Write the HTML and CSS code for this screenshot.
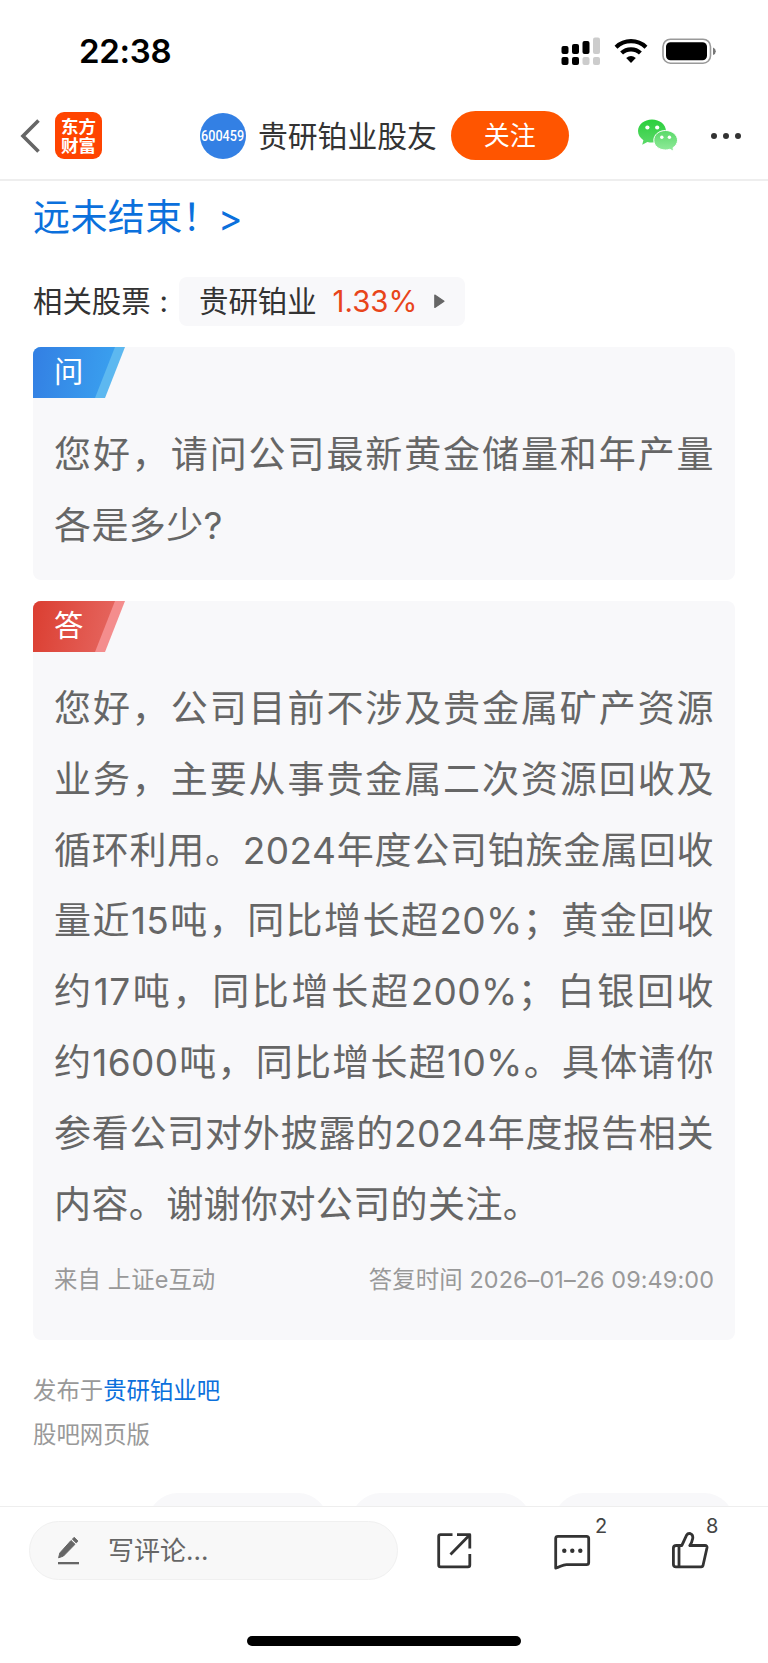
FILE: index.html
```html
<!DOCTYPE html>
<html lang="zh-CN">
<head>
  <meta charset="UTF-8" />
  <meta name="viewport" content="width=device-width, initial-scale=1.0"/>
  <title>贵研铂业股友</title>
  <link rel="stylesheet" href="styles.css">
</head>
<body>
  <div class="status-bar">
    <span class="time">22:38</span>
    <svg class="status-icons" width="156" height="30" viewBox="0 0 156 30">
      <g fill="#000">
        <rect x="0.5" y="10" width="7" height="8" rx="2"/>
        <rect x="11" y="8" width="7" height="10" rx="2"/>
        <rect x="21.5" y="5" width="7" height="13" rx="2"/>
        <rect x="0.5" y="21" width="7" height="8" rx="2"/>
        <rect x="11" y="21" width="7" height="8" rx="2"/>
      </g>
      <g fill="#ccc">
        <rect x="32" y="1.5" width="7" height="16.5" rx="2"/>
        <rect x="21.5" y="21" width="7" height="8" rx="2"/>
        <rect x="32" y="21" width="7" height="8" rx="2"/>
      </g>
      <g fill="none" stroke="#000" stroke-width="4.2">
        <path d="M55 11.2 C63.500 3.200 76.500 3.200 85 11.200"/>
        <path d="M60.600 17 C65.800 12.100 74.200 12.100 79.400 17"/>
      </g>
      <path d="M65.200 22 Q70 18 74.800 22 L70 27 Z" fill="#000"/>
      <rect x="102" y="3.200" width="47.500" height="24" rx="7.500" fill="none" stroke="#999" stroke-width="1.600"/>
      <rect x="105" y="6.200" width="41" height="18" rx="4.500" fill="#000"/>
      <path d="M152 11.500 Q154.800 12.500 154.800 15.200 Q154.800 18 152 19 Z" fill="#777"/>
    </svg>
  </div>

  <header class="nav">
    <svg class="back" width="22" height="36" viewBox="0 0 22 36">
      <path d="M18.500 2.500 L3 18 L18.500 33.500" fill="none" stroke="#666" stroke-width="3.600"/>
    </svg>
    <div class="logo"><span>东方</span><span>财富</span></div>
    <div class="avatar"><span>600459</span></div>
    <h1 class="nav-title">贵研铂业股友</h1>
    <button class="follow">关注</button>
    <svg class="wechat" width="40" height="33" viewBox="0 0 40 33">
      <defs>
        <linearGradient id="green" x1="0" y1="0" x2="0" y2="1">
          <stop offset="0" stop-color="#2bcf3c"/>
          <stop offset="1" stop-color="#5bd969"/>
        </linearGradient>
        <linearGradient id="lightgreen" x1="0" y1="0" x2="0" y2="1">
          <stop offset="0" stop-color="#59d968"/>
          <stop offset="1" stop-color="#93eb9d"/>
        </linearGradient>
      </defs>
      <path d="M14 0.500 C6.300 0.500 0 5.500 0 12 C0 15.800 2.200 19 5.400 21.200 L4.200 25.800 L9.400 23 C11 23.500 12.500 23.600 14 23.600 C21.700 23.600 28 18.500 28 12 C28 5.500 21.700 0.500 14 0.500 Z" fill="url(#green)"/>
      <circle cx="9.400" cy="8.500" r="2.100" fill="#fff"/>
      <circle cx="19.200" cy="8.500" r="2.100" fill="#fff"/>
      <path d="M27.500 11.500 C20.900 11.500 15.800 15.800 15.800 21.200 C15.800 26.700 20.900 31 27.500 31 C29 31 30.500 30.800 31.800 30.300 L35.600 32.300 L35 28.700 C37.800 26.900 39.500 24.200 39.500 21.200 C39.500 15.800 34.100 11.500 27.500 11.500 Z" fill="url(#lightgreen)" stroke="#fff" stroke-width="1"/>
      <circle cx="23.800" cy="18.200" r="1.700" fill="#fff"/>
      <circle cx="31.400" cy="18.200" r="1.700" fill="#fff"/>
    </svg>
    <svg class="more" width="32" height="8" viewBox="0 0 32 8">
      <circle cx="4" cy="4" r="3" fill="#333"/>
      <circle cx="16" cy="4" r="3" fill="#333"/>
      <circle cx="28" cy="4" r="3" fill="#333"/>
    </svg>
  </header>

  <main class="content">
    <a class="topic">远未结束！<span>&gt;</span></a>

    <div class="related">
      <span class="related-label">相关股票<i>:</i></span>
      <div class="stock">
        <span class="stock-name">贵研铂业</span>
        <span class="rise">1.33%</span>
        <svg width="11" height="15" viewBox="0 0 11 15">
          <path d="M0.800 1 L10 7.200 L0.800 13.400 Z" fill="#666" stroke="#666" stroke-width="1.200" stroke-linejoin="round"/>
        </svg>
      </div>
    </div>

    <section class="card question">
      <div class="tag"><span>问</span></div>
      <div class="text">
        <p>您好，请问公司最新黄金储量和年产量</p>
        <p class="last">各是多少?</p>
      </div>
    </section>

    <section class="card answer">
      <div class="tag"><span>答</span></div>
      <div class="text">
        <p>您好，公司目前不涉及贵金属矿产资源</p>
        <p>业务，主要从事贵金属二次资源回收及</p>
        <p>循环利用。2024年度公司铂族金属回收</p>
        <p>量近15吨，同比增长超20%；黄金回收</p>
        <p>约17吨，同比增长超200%；白银回收</p>
        <p>约1600吨，同比增长超10%。具体请你</p>
        <p>参看公司对外披露的2024年度报告相关</p>
        <p class="last">内容。谢谢你对公司的关注。</p>
      </div>
      <div class="source">
        <span>来自 上证e互动</span>
        <span>答复时间 2026–01–26 09:49:00</span>
      </div>
    </section>

    <div class="publish">
      <div>发布于<a>贵研铂业吧</a></div>
      <div>股吧网页版</div>
    </div>

    <div class="chips">
      <span></span><span></span><span></span>
    </div>
  </main>

  <footer class="toolbar">
    <div class="comment-box">
      <svg width="22" height="29" viewBox="0 0 22 29">
        <path d="M0.600 21.800 L1.800 17 L13 4.500 L17 8.300 L5.500 20 Z" fill="#666" stroke="#666" stroke-width="1" stroke-linejoin="round"/>
        <path d="M14.300 3.200 L16.200 1.200 L20 5 L18.200 7 Z" fill="#666" stroke="#666" stroke-width="0.800" stroke-linejoin="round"/>
        <rect x="0" y="26" width="21" height="2.300" fill="#666"/>
      </svg>
      <span>写评论...</span>
    </div>
    <div class="actions">
      <div class="action">
        <svg width="38" height="38" viewBox="0 0 38 38">
          <g fill="none" stroke="#333" stroke-width="2.800" stroke-linejoin="round">
            <path d="M17.500 2.700 H5.500 Q3.700 2.700 3.700 4.500 V33 Q3.700 34.800 5.500 34.800 H33 Q34.800 34.800 34.800 33 V22"/>
            <path d="M22 2.700 H34.800 V16.500 M34.800 2.700 L15.500 22.500"/>
          </g>
        </svg>
      </div>
      <div class="action">
        <svg width="38" height="38" viewBox="0 0 38 38">
          <path d="M2.700 35.300 V6.500 Q2.700 4.300 4.900 4.300 H33.500 Q35.700 4.300 35.700 6.500 V30.500 Q35.700 32.700 33.500 32.700 H13.500 C9 32.700 7 35.300 2.700 36 Z" fill="none" stroke="#333" stroke-width="2.800" stroke-linejoin="round"/>
          <circle cx="11.300" cy="18.700" r="2.200" fill="#333"/>
          <circle cx="19.300" cy="18.700" r="2.200" fill="#333"/>
          <circle cx="27.300" cy="18.700" r="2.200" fill="#333"/>
        </svg>
        <span class="count">2</span>
      </div>
      <div class="action like">
        <svg width="38" height="38" viewBox="0 0 38 38">
          <g fill="none" stroke="#333" stroke-width="2.800" stroke-linejoin="round">
            <path d="M5.500 13.500 H10.800 C12.600 10 14 6.500 15.500 3.300 Q17 0.900 19.500 1.700 Q22.300 2.800 21.700 6.500 Q21 10.500 18.800 13.500 H34 Q36.300 13.500 36 15.800 L32 33.500 Q31.600 34.900 30.300 34.900 H5 Q2.400 34.900 2.400 32.300 V16 Q2.400 13.500 5.500 13.500 Z"/>
            <path d="M8 13.800 V34.800"/>
          </g>
        </svg>
        <span class="count">8</span>
      </div>
    </div>
    <div class="home-indicator"></div>
  </footer>
</body>
</html>
```
FILE: styles.css
```css
* {
  box-sizing: border-box;
}
body {
  display: flex;
  flex-direction: column;
  height: 1663px;
  margin: 0;
  overflow: hidden;
  background: #fff;
  color: #333;
  font-family: Inter, "Noto Sans CJK SC", sans-serif;
  font-weight: 400;
}
p, h1 {
  margin: 0;
}
svg {
  display: block;
  flex: none;
}

/* status bar */
.status-bar {
  display: flex;
  flex: none;
  justify-content: space-between;
  height: 92px;
  padding: 36px 51px 0 79px;
}
.time {
  color: #000;
  font-size: 33px;
  font-weight: 600;
  line-height: 31px;
  letter-spacing: -0.3px;
}

/* nav */
.nav {
  display: flex;
  flex: none;
  align-items: center;
  height: 89px;
  padding: 0 26px 0 20px;
  border-bottom: 2px solid #eee;
}
.logo {
  display: flex;
  flex-direction: column;
  justify-content: center;
  width: 47px;
  height: 47px;
  margin-left: 13px;
  border-radius: 9px;
  background: #ff4400;
  color: #fff;
  font-size: 17.5px;
  font-weight: 700;
  line-height: 19px;
  text-align: center;
}
.avatar {
  display: flex;
  align-items: center;
  justify-content: center;
  width: 46px;
  height: 46px;
  margin-left: 98px;
  border-radius: 50%;
  background: #3380e4;
  color: #fff;
  font-family: Roboto, sans-serif;
  font-size: 15px;
  font-weight: 500;
}
.avatar span {
  transform: scaleX(0.84);
}
.nav-title {
  margin-left: 12px;
  font-size: 29.8px;
  font-weight: 400;
  line-height: 44px;
  white-space: nowrap;
}
.follow {
  width: 118px;
  height: 49px;
  margin-left: 14px;
  padding: 0;
  border: none;
  border-radius: 25px;
  background: #ff5500;
  color: #fff;
  font: inherit;
  font-size: 26px;
  line-height: 47px;
}
.wechat {
  margin-left: auto;
}
.more {
  margin-left: 32px;
}

/* post content */
.content {
  flex: 1;
  min-height: 0;
  padding: 0 33px;
  overflow: hidden;
}
.topic {
  display: block;
  padding: 10px 0 1px;
  color: #0b70dc;
  font-size: 37px;
  line-height: 54px;
  letter-spacing: 0.4px;
}
.topic span {
  margin-left: -2px;
}
.related {
  display: flex;
  align-items: center;
  height: 49px;
  margin-top: 31px;
  font-size: 29.4px;
}
.related-label {
  width: 146px;
  padding-bottom: 5px;
  white-space: nowrap;
}
.related-label i {
  margin-left: 9px;
  font-style: normal;
}
.stock {
  display: flex;
  align-items: center;
  width: 286px;
  height: 49px;
  padding-left: 20px;
  border-radius: 8px;
  background: #f8f8fa;
  white-space: nowrap;
}
.stock-name {
  padding-bottom: 5px;
}
.rise {
  width: 83px;
  margin: 0 18px 0 16px;
  color: #e8451b;
}

.card {
  padding: 0 21px;
  border-radius: 8px;
  background: #f8f8fa;
}
.question {
  height: 233px;
  margin-top: 21px;
}
.answer {
  height: 739px;
  margin-top: 21px;
}
.tag {
  width: 92px;
  height: 51px;
  margin-left: -21px;
  border-radius: 8px 0 0 0;
  overflow: hidden;
  clip-path: polygon(0 0, 100% 0, 72px 100%, 0 100%);
  background: #5db8f0;
  color: #fff;
  font-size: 29.4px;
  line-height: 50px;
}
.tag span {
  display: block;
  height: 51px;
  padding-left: 21px;
  clip-path: polygon(0 0, 82px 0, 62px 100%, 0 100%);
  background: linear-gradient(100deg, #337fe3, #3ba6f1);
}
.answer .tag {
  background: #f48d8d;
}
.answer .tag span {
  background: linear-gradient(100deg, #db3e31, #e76c66);
}
.text {
  padding-top: 22px;
  color: #666;
  font-size: 37px;
  line-height: 70.8px;
  letter-spacing: 0.4px;
}
.text p {
  white-space: nowrap;
  text-align: justify;
  text-align-last: justify;
  text-justify: inter-character;
}
.text .last {
  text-align-last: left;
}
.source {
  display: flex;
  justify-content: space-between;
  margin-top: 22px;
  color: #999;
  font-size: 23.4px;
  line-height: 36px;
  letter-spacing: 0.1px;
}
.publish {
  margin-top: 29px;
  color: #999;
  font-size: 23.4px;
  line-height: 44px;
}
.publish a {
  color: #0b70dc;
}
.chips {
  display: flex;
  gap: 23px;
  margin-top: 36px;
  padding-left: 115px;
}
.chips span {
  flex: none;
  width: 180px;
  height: 60px;
  border-radius: 30px;
  background: #f8f8fa;
}

/* bottom bar */
.toolbar {
  display: grid;
  flex: none;
  grid-template-columns: 369px 1fr;
  height: 157px;
  padding: 14px 29px 0;
  border-top: 1px solid #eee;
  align-content: start;
}
.comment-box {
  display: flex;
  align-items: center;
  height: 59px;
  padding-left: 28px;
  border: 1px solid #f0f0f0;
  border-radius: 30px;
  background: #f8f8f8;
  color: #666;
  font-size: 26px;
}
.comment-box span {
  margin-left: 28px;
  padding-bottom: 4px;
}
.actions {
  display: flex;
  gap: 80px;
  padding: 11px 0 0 37px;
}
.action {
  position: relative;
}
.count {
  position: absolute;
  top: -18px;
  left: 42px;
  color: #444;
  font-size: 20px;
  line-height: 24px;
}
.like .count {
  left: 35px;
}
.home-indicator {
  grid-column: 1 / 3;
  width: 274px;
  height: 10px;
  margin: 56px auto 0;
  border-radius: 5px;
  background: #000;
}
```
